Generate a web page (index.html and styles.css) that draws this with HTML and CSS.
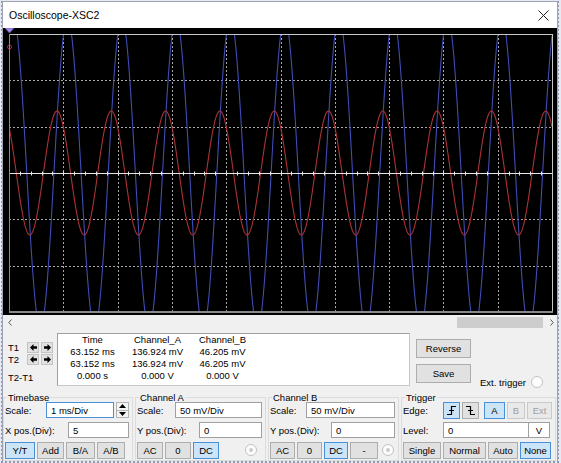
FILE: index.html
```html
<!DOCTYPE html>
<html>
<head>
  <meta charset="UTF-8" />
  <title>Oscilloscope-XSC2</title>
  <link rel="stylesheet" href="styles.css">
</head>
<body>
  <div class="window">
    <div class="titlebar">
      <span class="title">Oscilloscope-XSC2</span>
      <svg class="close" width="11" height="11" viewBox="0 0 11 11">
        <path d="M0.5 0.5 L10.5 10.5 M10.5 0.5 L0.5 10.5" stroke="#222" fill="none" />
      </svg>
    </div>

    <!-- Scope screen -->
    <div class="screen">
      <svg id="scope" width="554" height="287" viewBox="3 28 554 287">
        <defs>
          <clipPath id="plot"><rect x="9" y="34" width="544" height="278" /></clipPath>
        </defs>
        <g id="grid" stroke="#a8a8a8" stroke-dasharray="2 2"></g>
        <g clip-path="url(#plot)" fill="none" stroke-width="1.1">
          <path id="chB" stroke="#3f4db5" />
          <path id="chA" stroke="#ab3236" />
        </g>
        <g id="axes" stroke="#e6e6e6"></g>
        <line x1="9" y1="34.5" x2="553" y2="34.5" stroke="#c8c8c8" />
        <line x1="552.5" y1="34" x2="552.5" y2="312" stroke="#c8c8c8" />
        <line x1="9" y1="312" x2="553" y2="312" stroke="#8a8a8a" stroke-width="2" />
        <line x1="9.5" y1="34" x2="9.5" y2="313" stroke="#3fbf3f" />
        <path d="M5 28 L14 28 L9.5 33 Z" fill="#a08ee6" stroke="#6a52c4" stroke-width="0.8" />
        <circle cx="9.5" cy="47" r="2" fill="none" stroke="#c04060" stroke-width="0.8" />
      </svg>
    </div>

    <div class="hscroll">
      <svg width="4" height="7" viewBox="0 0 4 7"><path d="M3.5 0.5 L0.8 3.5 L3.5 6.5" stroke="#555" fill="none" /></svg>
      <div class="track"><div class="thumb"></div></div>
      <svg width="4" height="7" viewBox="0 0 4 7"><path d="M0.5 0.5 L3.2 3.5 L0.5 6.5" stroke="#555" fill="none" /></svg>
    </div>

    <!-- Cursor readout -->
    <div class="readrow">
      <div class="cursors">
        <div class="crow">
          <span class="clabel">T1</span>
          <button class="arr"><svg width="7" height="7" viewBox="0 0 7 7"><path d="M0 3.5 L3.5 0 L3.5 2.3 L7 2.3 L7 4.7 L3.5 4.7 L3.5 7 Z" /></svg></button>
          <button class="arr"><svg width="7" height="7" viewBox="0 0 7 7"><path d="M7 3.5 L3.5 0 L3.5 2.3 L0 2.3 L0 4.7 L3.5 4.7 L3.5 7 Z" /></svg></button>
        </div>
        <div class="crow">
          <span class="clabel">T2</span>
          <button class="arr"><svg width="7" height="7" viewBox="0 0 7 7"><path d="M0 3.5 L3.5 0 L3.5 2.3 L7 2.3 L7 4.7 L3.5 4.7 L3.5 7 Z" /></svg></button>
          <button class="arr"><svg width="7" height="7" viewBox="0 0 7 7"><path d="M7 3.5 L3.5 0 L3.5 2.3 L0 2.3 L0 4.7 L3.5 4.7 L3.5 7 Z" /></svg></button>
        </div>
        <div class="crow diff">T2-T1</div>
      </div>

      <div class="readout">
        <span>Time</span><span>Channel_A</span><span>Channel_B</span>
        <span>63.152 ms</span><span>136.924 mV</span><span>46.205 mV</span>
        <span>63.152 ms</span><span>136.924 mV</span><span>46.205 mV</span>
        <span>0.000 s</span><span>0.000 V</span><span>0.000 V</span>
      </div>

      <div class="actions">
        <button class="btn">Reverse</button>
        <button class="btn">Save</button>
      </div>

      <div class="ext">
        <span>Ext. trigger</span>
        <span class="radio"></span>
      </div>
    </div>

    <!-- Settings -->
    <div class="groups">
      <fieldset class="group timebase">
        <legend>Timebase</legend>
        <div class="row">
          <label>Scale:</label>
          <input class="field focus" type="text" value="1 ms/Div" style="width: 68px;" />
          <div class="spin">
            <span><svg width="7" height="4" viewBox="0 0 7 4"><path d="M0 4 L3.5 0 L7 4 Z" /></svg></span>
            <span><svg width="7" height="4" viewBox="0 0 7 4"><path d="M0 0 L3.5 4 L7 0 Z" /></svg></span>
          </div>
        </div>
        <div class="row">
          <label>X pos.(Div):</label>
          <input class="field" type="text" value="5" style="width: 61px;" />
        </div>
        <div class="row buttons">
          <button class="btn on" style="width: 30px;">Y/T</button>
          <button class="btn" style="width: 27px;">Add</button>
          <button class="btn" style="width: 29px;">B/A</button>
          <button class="btn" style="width: 28px;">A/B</button>
        </div>
      </fieldset>

      <fieldset class="group">
        <legend>Channel A</legend>
        <div class="row">
          <label>Scale:</label>
          <input class="field" type="text" value="50 mV/Div" style="width: 87px;" />
        </div>
        <div class="row">
          <label>Y pos.(Div):</label>
          <input class="field" type="text" value="0" style="width: 63px;" />
        </div>
        <div class="row buttons">
          <button class="btn" style="width: 26px;">AC</button>
          <button class="btn" style="width: 26px;">0</button>
          <button class="btn on" style="width: 26px;">DC</button>
          <span class="radio dot" style="margin-right: 5px;"><span></span></span>
        </div>
      </fieldset>

      <fieldset class="group">
        <legend>Channel B</legend>
        <div class="row">
          <label>Scale:</label>
          <input class="field" type="text" value="50 mV/Div" style="width: 89px;" />
        </div>
        <div class="row">
          <label>Y pos.(Div):</label>
          <input class="field" type="text" value="0" style="width: 64px;" />
        </div>
        <div class="row buttons">
          <button class="btn" style="width: 25px;">AC</button>
          <button class="btn" style="width: 25px;">0</button>
          <button class="btn on" style="width: 24px;">DC</button>
          <button class="btn" style="width: 28px;">-</button>
          <span class="radio dot" style="margin-right: 1px;"><span></span></span>
        </div>
      </fieldset>

      <fieldset class="group trigger">
        <legend>Trigger</legend>
        <div class="row">
          <label class="tlabel">Edge:</label>
          <button class="btn on" style="width: 17px;"><svg width="11" height="11" viewBox="0 0 11 11"><path d="M1 9.5 H5.5 V1.5 H10 M3 5.5 H8" stroke="#000" stroke-width="1.2" fill="none" /></svg></button>
          <button class="btn" style="width: 17px;"><svg width="11" height="11" viewBox="0 0 11 11"><path d="M1 1.5 H5.5 V9.5 H10 M3 5.5 H8" stroke="#000" stroke-width="1.2" fill="none" /></svg></button>
          <button class="btn on" style="width: 21px; margin-left: 3px;">A</button>
          <button class="btn off" style="width: 18px;">B</button>
          <button class="btn off" style="width: 25px;">Ext</button>
        </div>
        <div class="row">
          <label class="tlabel">Level:</label>
          <input class="field" type="text" value="0" style="width: 86px;" />
          <span class="unit">V</span>
        </div>
        <div class="row buttons">
          <button class="btn" style="width: 38px;">Single</button>
          <button class="btn" style="width: 43px;">Normal</button>
          <button class="btn" style="width: 30px;">Auto</button>
          <button class="btn on" style="width: 31px;">None</button>
        </div>
      </fieldset>
    </div>
  </div>

  <script>
    // Plot area in page coordinates (svg viewBox uses the same numbers)
    const svgNS = 'http://www.w3.org/2000/svg';
    const LEFT = 9, RIGHT = 552, TOP = 34, BOTTOM = 312;
    const DIV_X = (RIGHT - LEFT) / 10;
    const DIV_Y = (BOTTOM - TOP) / 6;
    const MID_Y = TOP + DIV_Y * 3;

    function addLine(group, x1, y1, x2, y2) {
      const l = document.createElementNS(svgNS, 'line');
      l.setAttribute('x1', x1);
      l.setAttribute('y1', y1);
      l.setAttribute('x2', x2);
      l.setAttribute('y2', y2);
      group.appendChild(l);
    }

    const grid = document.getElementById('grid');
    const axes = document.getElementById('axes');

    // dotted divisions
    for (let i = 1; i < 10; i++) {
      const x = Math.round(LEFT + DIV_X * i) + 0.5;
      addLine(grid, x, TOP, x, BOTTOM);
    }
    for (let j = 1; j < 6; j++) {
      if (j === 3) continue;
      const y = Math.round(TOP + DIV_Y * j) + 0.5;
      addLine(grid, LEFT, y, RIGHT, y);
    }

    // centre line with ticks
    const cy = Math.round(MID_Y) + 0.5;
    addLine(axes, LEFT, cy, RIGHT, cy);
    for (let i = 1; i < 50; i++) {
      const x = Math.round(LEFT + DIV_X * i / 5) + 0.5;
      addLine(axes, x, cy - 2, x, cy + 2);
    }

    // 1 kHz traces, one period per division
    function trace(id, peakX, amp) {
      let d = '';
      for (let x = LEFT; x <= RIGHT; x += 0.5) {
        const y = MID_Y - amp * Math.cos(2 * Math.PI * (x - peakX) / DIV_X);
        d += (d ? 'L' : 'M') + x + ',' + y.toFixed(2);
      }
      document.getElementById(id).setAttribute('d', d);
    }
    trace('chA', 57, 62);
    trace('chB', 67.5, 155);
  </script>
</body>
</html>
```

FILE: styles.css
```css
body {
  margin: 0;
  width: 561px;
  height: 463px;
  overflow: hidden;
  background-color: #e6e9f2;
  background-image: radial-gradient(circle, #8f98ae 0.7px, transparent 1px);
  background-size: 4px 4px;
  font-family: 'Liberation Sans', Arial, sans-serif;
  font-size: 9.5px;
  color: #000;
}
.window {
  margin: 1px 0 0 2px;
  width: 554px;
  border: 1px solid #9aa2b4;
  border-bottom: none;
  background: #f0f0f0;
}
.titlebar {
  height: 26px;
  background: #fff;
  display: flex;
  align-items: center;
  justify-content: space-between;
  padding: 0 8px 0 6px;
}
.title {
  font-size: 10.5px;
}
.close {
  display: block;
}
.screen {
  height: 287px;
  background: #000;
}
.screen svg {
  display: block;
}
.hscroll {
  height: 15px;
  display: flex;
  align-items: center;
  padding: 0 3px 0 5px;
}
.track {
  flex: 1;
  height: 11px;
  display: flex;
  margin-right: 7px;
}
.thumb {
  margin-left: auto;
  width: 86px;
  height: 11px;
  background: #cdcdcd;
}
.readrow {
  height: 58px;
  display: flex;
}
.cursors {
  width: 49px;
  padding: 11px 0 0 5px;
}
.crow {
  height: 12px;
  display: flex;
  align-items: center;
}
.clabel {
  width: 19px;
  flex-shrink: 0;
}
.crow.diff {
  margin-top: 6px;
}
.arr {
  flex-shrink: 0;
  width: 12px;
  height: 11px;
  padding: 0;
  margin-right: 2px;
  background: #e1e1e1;
  border: 1px solid #c4c4c4;
  display: flex;
  align-items: center;
  justify-content: center;
}
.readout {
  width: 349px;
  height: 51px;
  margin-top: 3px;
  background: #fff;
  border: 1px solid #a0a0a0;
  border-right-color: #c8c8c8;
  border-bottom-color: #c8c8c8;
  display: grid;
  grid-template-columns: repeat(3, 65px);
  grid-auto-rows: 12px;
  padding: 0 0 0 2px;
  line-height: 12px;
  text-align: center;
}
.actions {
  width: 55px;
  margin-left: 6px;
  padding-top: 9px;
  display: flex;
  flex-direction: column;
  gap: 6px;
}
.btn {
  height: 17px;
  padding: 0;
  background: #e1e1e1;
  border: 1px solid #adadad;
  font-family: inherit;
  font-size: 9.5px;
  color: #000;
  display: flex;
  align-items: center;
  justify-content: center;
}
.actions .btn {
  height: 19px;
}
.btn.on {
  background: #cce4f7;
  border-color: #4a90d6;
}
.btn.off {
  background: #e9e9e9;
  border-color: #cacaca;
  color: #a0a0a0;
}
.ext {
  margin-left: 9px;
  align-self: flex-end;
  display: flex;
  align-items: center;
  gap: 5px;
}
.radio {
  width: 12px;
  height: 12px;
  box-sizing: border-box;
  border-radius: 50%;
  border: 1px solid #c2c2c2;
  background: #fdfdfd;
  display: flex;
  align-items: center;
  justify-content: center;
}
.radio.dot span {
  width: 4px;
  height: 4px;
  border-radius: 50%;
  background: #cbcbcb;
}
.groups {
  display: flex;
  gap: 2px;
  padding-top: 4px;
}
.group {
  margin: 0;
  min-width: 0;
  width: 131px;
  box-sizing: border-box;
  padding: 0 3px 2px 1px;
  border: 1px solid #dcdcdc;
}
.group.timebase {
  width: 130px;
}
.group.trigger {
  width: 155px;
}
.group legend {
  padding: 0 1px;
  margin-left: 2px;
  line-height: 11px;
  margin-bottom: -1px;
}
.row {
  height: 16px;
  display: flex;
  align-items: center;
  gap: 2px;
}
.row + .row {
  margin-top: 4px;
}
.row label {
  margin-right: auto;
}
.row label.tlabel {
  width: 38px;
  margin-right: 0;
}
.row.buttons .radio {
  margin-left: auto;
}
.field {
  height: 16px;
  box-sizing: border-box;
  border: 1px solid #a0a0a0;
  padding: 0 4px;
  font-family: inherit;
  font-size: 9.5px;
  background: #fff;
  outline: none;
}
.field.focus {
  border-color: #4a90d6;
}
.spin {
  width: 13px;
  height: 16px;
  display: flex;
  flex-direction: column;
}
.spin span {
  flex: 1;
  background: #f4f4f4;
  border: 1px solid #b4b4b4;
  display: flex;
  align-items: center;
  justify-content: center;
}
.spin span + span {
  border-top: none;
}
.unit {
  width: 22px;
  height: 16px;
  box-sizing: border-box;
  margin-left: -3px;
  background: #fff;
  border: 1px solid #a0a0a0;
  display: flex;
  align-items: center;
  justify-content: center;
}
```
